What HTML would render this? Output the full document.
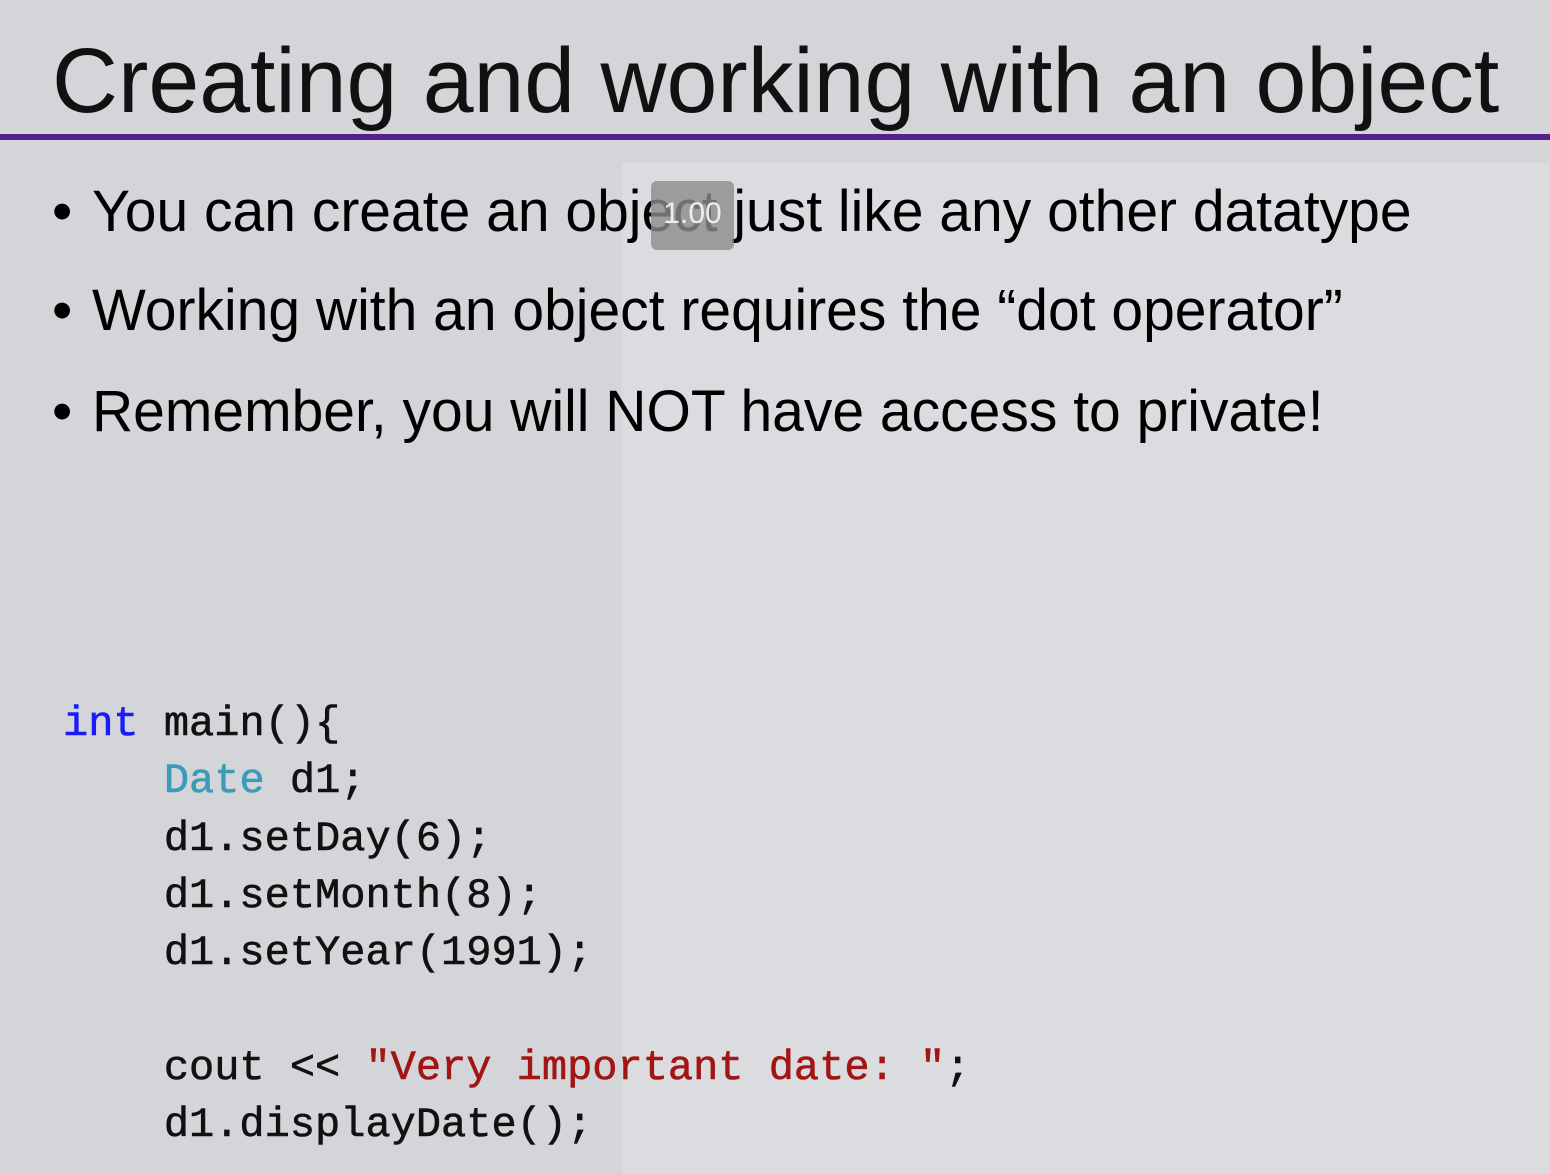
<!DOCTYPE html>
<html><head><style>
body{margin:0;width:1550px;height:1174px;background:#d4d5d8;position:relative;overflow:hidden;font-family:"Liberation Sans",sans-serif;color:#000}
.rp{position:absolute;left:622px;top:163px;right:0;bottom:0;background:#dbdcdf}
.title{position:absolute;left:52px;top:26px;font-size:92px;line-height:110px;white-space:nowrap;transform-origin:0 0;color:#111;transform:scaleX(0.993)}
.bar{position:absolute;left:0;top:134px;width:1550px;height:6px;background:#55208a}
.dot{position:absolute;left:52px;font-size:58px;line-height:70px}
.b{position:absolute;left:92px;font-size:58px;line-height:70px;white-space:nowrap;transform-origin:0 0;transform:scaleX(0.983)}
.code{position:absolute;left:63px;top:696px;font-family:"Liberation Mono",monospace;font-size:42px;line-height:57.3px;white-space:pre;color:#111;-webkit-text-stroke:0.6px #111}
.badge{position:absolute;left:651px;top:181px;width:83px;height:69px;background:rgba(140,140,140,0.8);border-radius:6px;color:#eee;font-size:30px;text-align:center;line-height:66px}
</style></head><body>
<div class="rp"></div>
<div class="title">Creating and working with an object</div>
<div class="bar"></div>
<div class="dot" style="top:177px">•</div>
<div class="dot" style="top:276px">•</div>
<div class="dot" style="top:377px">•</div>
<div class="b" style="top:177px">You can create an object just like any other datatype</div>
<div class="b" style="top:276px">Working with an object requires the “dot operator”</div>
<div class="b" style="top:377px">Remember, you will NOT have access to private!</div>
<div class="badge">1.00</div>
<div class="code"><span style="color:#1a1aff;-webkit-text-stroke-color:#1a1aff">int</span> main(){
    <span style="color:#3b9bb8;-webkit-text-stroke-color:#3b9bb8">Date</span> d1;
    d1.setDay(6);
    d1.setMonth(8);
    d1.setYear(1991);

    cout &lt;&lt; <span style="color:#a31515;-webkit-text-stroke-color:#a31515">"Very important date: "</span>;
    d1.displayDate();</div>
</body></html>
